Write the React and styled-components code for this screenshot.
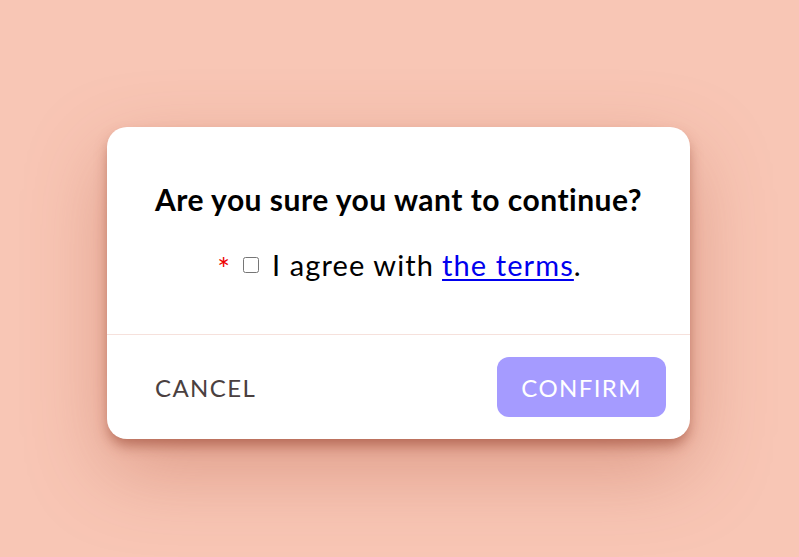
import React from "react";
import styled, { createGlobalStyle } from "styled-components";

const Global = createGlobalStyle`
  html, body { margin: 0; padding: 0; height: 100%; }
  body { background: #f8c6b5; font-family: Lato, "Noto Sans", sans-serif; }
  #root { min-height: 100vh; }
`;

const Page = styled.div`
  min-height: 557px;
  display: flex;
  align-items: center;
  justify-content: center;
  box-sizing: border-box;
  padding-top: 9px;
  padding-right: 2px;
`;

const Card = styled.div`
  width: 583px;
  background: #fff;
  border-radius: 20px;
  box-shadow: 0 8px 14px -2px rgba(140, 55, 35, 0.55), 0 30px 80px rgba(180, 85, 60, 0.38);
  overflow: hidden;
`;

const Body = styled.div`
  padding: 54px 40px 51px;
  display: flex;
  flex-direction: column;
  align-items: center;
  gap: 30px;
  border-bottom: 1px solid #f6e1dc;
`;

const Title = styled.h2`
  margin: 0;
  font-family: Lato, sans-serif;
  font-weight: 700;
  font-size: 30px;
  letter-spacing: 0.5px;
  line-height: 36px;
  color: #000;
  text-align: center;
`;

const Agree = styled.label`
  display: flex;
  align-items: center;
  font-family: Lato, sans-serif;
  font-size: 29px;
  letter-spacing: 1.1px;
  line-height: 36px;
  color: #000;
  padding-left: 2px;
`;

const Req = styled.span`
  color: #e00;
  font-size: 30px;
  line-height: 30px;
  margin-right: 12px;
  position: relative;
  top: 3px;
`;

const Box = styled.input`
  width: 16px;
  height: 16px;
  margin: 0 13px 0 0;
  accent-color: #666;
`;

const Link = styled.a`
  color: #0000ee;
  text-decoration: underline;
  text-underline-offset: 3px;
  text-decoration-thickness: 2px;
  margin-left: 8px;
`;

const Footer = styled.div`
  display: flex;
  justify-content: space-between;
  align-items: center;
  padding: 22px 24px;
`;

const Button = styled.button`
  border: none;
  height: 60px;
  padding: 0 24px;
  border-radius: 12px;
  font-family: Lato, sans-serif;
  font-size: 24px;
  letter-spacing: 1.4px;
  text-transform: uppercase;
  cursor: pointer;
  background: ${(p) => (p.$primary ? "#a59bff" : "transparent")};
  color: ${(p) => (p.$primary ? "#fff" : "#4a4040")};
`;

export default function App() {
  return (
    <>
      <Global />
      <Page>
        <Card>
          <Body>
            <Title>Are you sure you want to continue?</Title>
            <Agree>
              <Req>*</Req>
              <Box type="checkbox" />
              I agree with<Link href="#">the terms</Link>.
            </Agree>
          </Body>
          <Footer>
            <Button>Cancel</Button>
            <Button $primary>Confirm</Button>
          </Footer>
        </Card>
      </Page>
    </>
  );
}
